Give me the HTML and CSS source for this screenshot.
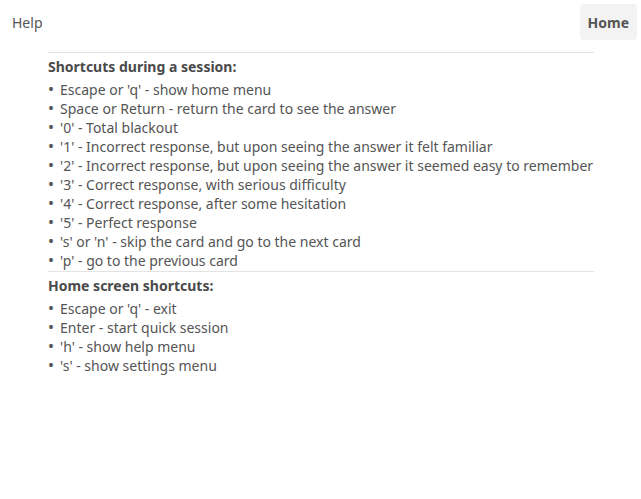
FILE: index.html
```html
<!DOCTYPE html>
<html>
<head>
<meta charset="utf-8">
<link rel="stylesheet" href="styles.css">
</head>
<body>
<header class="topbar">
  <span class="title">Help</span>
  <button class="home-btn">Home</button>
</header>
<main class="content">
  <section class="group">
    <h2 class="group-title">Shortcuts during a session:</h2>
    <ul class="list">
      <li>Escape or 'q' - show home menu</li>
      <li>Space or Return - return the card to see the answer</li>
      <li>'0' - Total blackout</li>
      <li>'1' - Incorrect response, but upon seeing the answer it felt familiar</li>
      <li>'2' - Incorrect response, but upon seeing the answer it seemed easy to remember</li>
      <li>'3' - Correct response, with serious difficulty</li>
      <li>'4' - Correct response, after some hesitation</li>
      <li>'5' - Perfect response</li>
      <li>'s' or 'n' - skip the card and go to the next card</li>
      <li>'p' - go to the previous card</li>
    </ul>
  </section>
  <section class="group">
    <h2 class="group-title">Home screen shortcuts:</h2>
    <ul class="list">
      <li>Escape or 'q' - exit</li>
      <li>Enter - start quick session</li>
      <li>'h' - show help menu</li>
      <li>'s' - show settings menu</li>
    </ul>
  </section>
</main>
</body>
</html>
```
FILE: styles.css
```css
html, body {
  margin: 0;
  padding: 0;
  background: #fff;
}
body {
  font-family: "Noto Sans", "Open Sans", sans-serif;
  font-size: 14px;
  color: #555;
}
.topbar {
  display: flex;
  justify-content: space-between;
  align-items: center;
  padding: 4px 4px 0 12px;
  height: 40px;
  box-sizing: border-box;
}
.title {
  font-size: 14px;
  color: #555;
}
.home-btn {
  font-family: inherit;
  font-size: 14px;
  font-weight: 700;
  color: #555;
  background: #f3f3f3;
  border: none;
  border-radius: 4px;
  height: 36px;
  padding: 0 8px;
}
.content {
  margin: 12px 47px 0 48px;
}
.group {
  border-top: 1px solid #e3e3e3;
  padding-top: 4px;
}
.group-title {
  margin: 0 0 4px 0;
  font-size: 14px;
  font-weight: 700;
  line-height: 19px;
  color: #4a4a4a;
}
.list {
  list-style: none;
  margin: 0;
  padding: 0 0 1px 0;
}
.list li {
  display: flex;
  line-height: 19px;
  white-space: nowrap;
}
.list li::before {
  content: "\2022";
  width: 12px;
  flex: none;
  font-size: 16px;
  line-height: 19px;
}
```
